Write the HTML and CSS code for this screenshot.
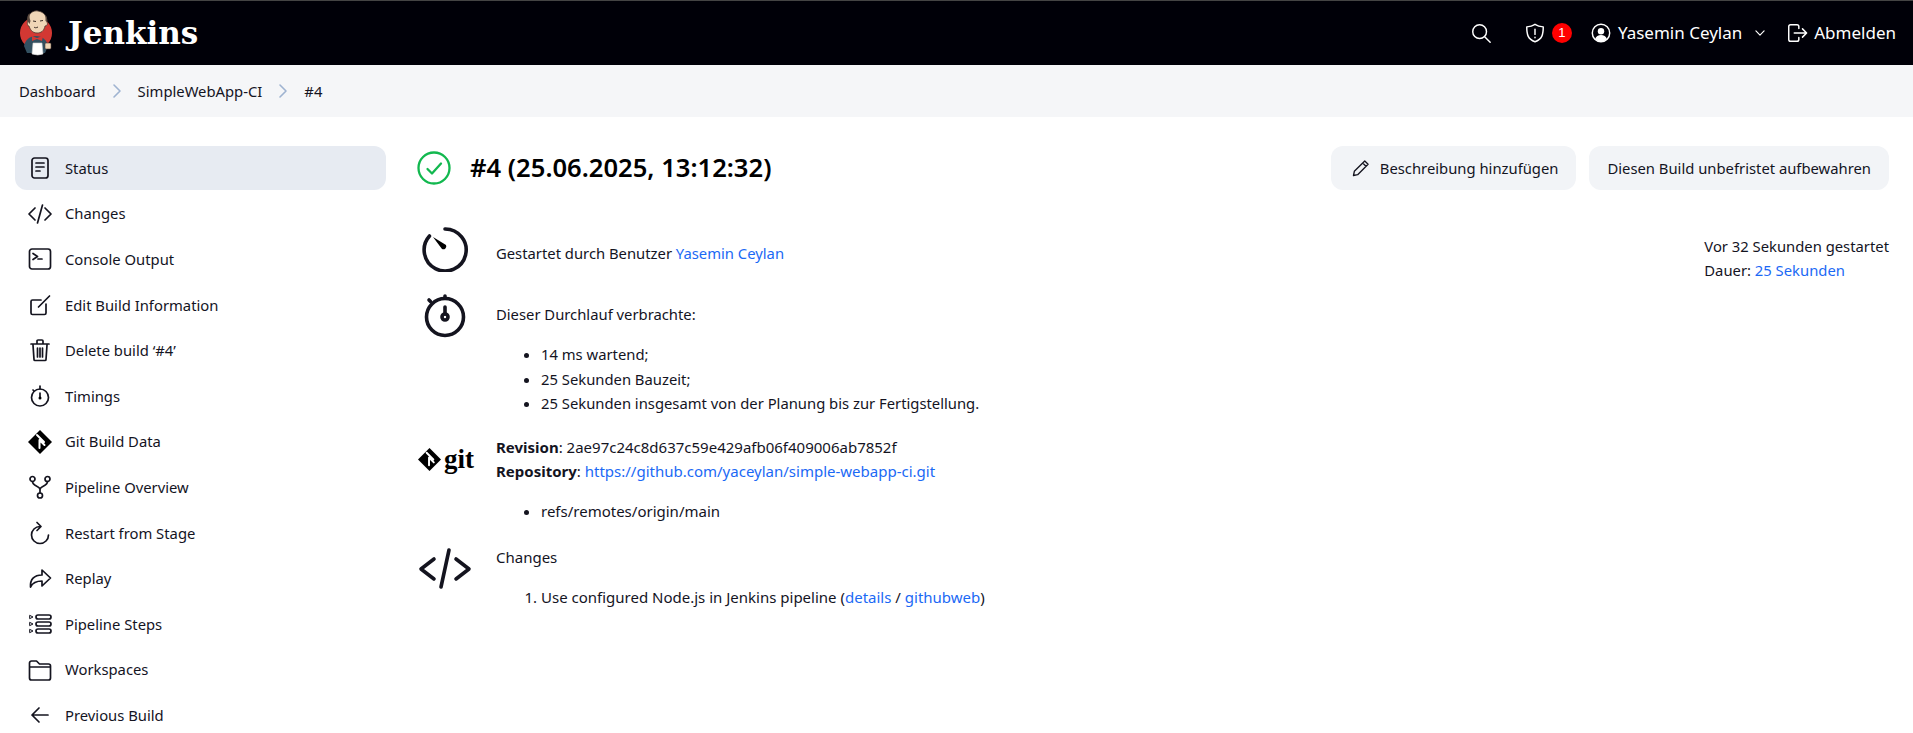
FILE: index.html
```html
<!DOCTYPE html>
<html lang="de">
<head>
<meta charset="utf-8">
<title>SimpleWebApp-CI #4 [Jenkins]</title>
<link rel="stylesheet" href="styles.css">
</head>
<body>
<header class="topbar">
  <a class="brand">
    <svg class="logo" viewBox="0 0 40 48" width="40" height="48">
      <circle cx="18" cy="24" r="16" fill="#d33833"/>
      <path d="M6 37c1-6 6-10 12-10s11 4 12 10l-3 7H9z" fill="#335061"/>
      <path d="M10 11c0-6 5-10 10-9 6 1 9 5 9 11 1 2 0 4-2 4-1 5-4 7-8 7-5 0-7-4-8-7-2 0-2-4-1-6z" fill="#f0d6b7" stroke="#4a3b32" stroke-width=".8"/>
      <path d="M9.500 12c-1-3 0-6 2-8 0 3 0 6 1 8l-1 3zM27.500 6c1.500 2 2 4 1.500 7l-1.500-1z" fill="#5b4a3f"/>
      <path d="M15 12l3 .5M22 12l3-.5M20 18c-2 1-3 1-4 0" fill="none" stroke="#3a2c25" stroke-width="1"/>
      <path d="M14 27l5 2 6-2-1 5-5-2-5 2z" fill="#d33833"/>
      <path d="M15 34h9l1 11q-5 2-11 0z" fill="#fff" stroke="#ccc" stroke-width=".6"/>
      <rect x="27" y="34" width="6" height="6" rx="1" fill="#f0d6b7" stroke="#4a3b32" stroke-width=".6"/>
    </svg>
    <span class="brand-name">Jenkins</span>
  </a>
  <nav class="top-actions">
    <svg class="ti search" viewBox="0 0 24 24"><circle cx="10.500" cy="10.500" r="7.500"/><path d="M16 16l6 6"/></svg>
    <svg class="ti shield" viewBox="0 0 24 24"><path d="M12 2.500c3 2 6 2.600 9 2.800 0 8-1 13.500-9 16.200C4 18.800 3 13.300 3 5.300c3-.2 6-.8 9-2.800z"/><path d="M12 8v5.500M12 16.500v.6"/></svg>
    <span class="badge">1</span>
    <svg class="ti user" viewBox="0 0 24 24"><circle cx="12" cy="12" r="9.500"/><circle class="fill" cx="12" cy="10" r="3.500"/><path class="fill" d="M5.500 18.500c1-3 3.500-4.300 6.500-4.300s5.500 1.300 6.500 4.300A9.500 9.500 0 0 1 12 21.500a9.500 9.500 0 0 1-6.500-3z"/></svg>
    <span class="user-name">Yasemin Ceylan</span>
    <svg class="ti chev" viewBox="0 0 24 24"><path d="M5 8.500l7 7 7-7"/></svg>
    <svg class="ti logout" viewBox="0 0 24 24"><path d="M14 7V5a2 2 0 0 0-2-2H5a2 2 0 0 0-2 2v14a2 2 0 0 0 2 2h7a2 2 0 0 0 2-2v-2M9 12h13M18 7.500l4.500 4.500-4.500 4.500"/></svg>
    <span class="logout-text">Abmelden</span>
  </nav>
</header>

<div class="crumbs">
  <a>Dashboard</a>
  <svg class="sep" viewBox="0 0 12 16"><path d="M3 2l6 6-6 6"/></svg>
  <a>SimpleWebApp-CI</a>
  <svg class="sep" viewBox="0 0 12 16"><path d="M3 2l6 6-6 6"/></svg>
  <a>#4</a>
</div>

<div class="page">
  <aside class="side">
    <a class="item active"><svg class="si" viewBox="0 0 24 24"><rect x="4" y="2" width="16" height="20" rx="2.500"/><path d="M8 7h8M8 11h8M8 15h4"/></svg>Status</a>
    <a class="item"><svg class="si" viewBox="0 0 24 24"><path d="M7 6l-6 6 6 6M17 6l6 6-6 6M14.500 3l-5 18"/></svg>Changes</a>
    <a class="item"><svg class="si" viewBox="0 0 24 24"><rect x="1.500" y="2" width="21" height="20" rx="2.500"/><path d="M5 6.500l4.500 3-4.500 3M10 12h4"/></svg>Console Output</a>
    <a class="item"><svg class="si" viewBox="0 0 24 24"><path d="M18 11v9a1.500 1.500 0 0 1-1.500 1.500H4.500A1.500 1.500 0 0 1 3 20V8.500A1.500 1.500 0 0 1 4.500 7H13M10.500 14L21.500 3"/></svg>Edit Build Information</a>
    <a class="item"><svg class="si" viewBox="0 0 24 24"><path d="M5 7l1 14.500a1 1 0 0 0 1 1h10a1 1 0 0 0 1-1L19 7M3 6h18M9 6V3a1 1 0 0 1 1-1h4a1 1 0 0 1 1 1v3M9.500 10v9M12 10v9M14.500 10v9"/></svg>Delete build ‘#4’</a>
    <a class="item"><svg class="si" viewBox="0 0 24 24"><circle cx="12" cy="13.500" r="8.500"/><path d="M12 5V2M12 14V9M6 7L5 6"/><circle class="dark" cx="12" cy="14" r="1.500"/></svg>Timings</a>
    <a class="item"><svg class="si git" viewBox="0 0 24 24"><path class="dark" d="M12 0 24 12 12 24 0 12z"/><path class="cut" d="M9 5l7 7M11.500 10v8M11.500 10l5 5"/></svg>Git Build Data</a>
    <a class="item"><svg class="si" viewBox="0 0 24 24"><circle cx="4.500" cy="4" r="2.500"/><circle cx="19.500" cy="4" r="2.500"/><circle cx="12" cy="20.500" r="2.500"/><path d="M4.500 6.500c0 5 7.500 4.500 7.500 8v3.500M19.500 6.500c0 5-7.500 4.500-7.500 8"/></svg>Pipeline Overview</a>
    <a class="item"><svg class="si" viewBox="0 0 24 24"><path d="M12 5.500a8.500 8.500 0 1 0 8.500 8.500M9 1.500l4 4-4 4"/></svg>Restart from Stage</a>
    <a class="item"><svg class="si" viewBox="0 0 24 24"><path d="M14 4l8.500 8L14 20v-5c-5 0-9 1-11.500 6C2 13.500 6 9 14 9z"/></svg>Replay</a>
    <a class="item"><svg class="si" viewBox="0 0 24 24"><rect x="8" y="3" width="15" height="4" rx="2"/><rect x="8" y="10" width="15" height="4" rx="2"/><rect x="8" y="17" width="15" height="4" rx="2"/><path class="thin" d="M2 3.500l3 1.500-3 1.500zM2 10.500l3 1.500-3 1.500zM2 17.500l3 1.500-3 1.500z"/></svg>Pipeline Steps</a>
    <a class="item"><svg class="si" viewBox="0 0 24 24"><path d="M1.500 20V5a2 2 0 0 1 2-2h5l3 3h9a2 2 0 0 1 2 2v12a2 2 0 0 1-2 2h-17a2 2 0 0 1-2-2zM1.500 9h21"/></svg>Workspaces</a>
    <a class="item"><svg class="si" viewBox="0 0 24 24"><path d="M20 12H4M11 5l-7 7 7 7"/></svg>Previous Build</a>
  </aside>

  <main class="main">
    <div class="head">
      <svg class="ok" viewBox="0 0 34 34"><circle cx="17" cy="17" r="15.500"/><path d="M10.500 18l4.500 4.500 9-10"/></svg>
      <h1>#4 (25.06.2025, 13:12:32)</h1>
      <button class="btn btn-icon"><svg class="pen" viewBox="0 0 24 24"><path d="M16.500 3.500l4 4L8 20l-5 1 1-5zM14 6l4 4"/></svg>Beschreibung hinzufügen</button>
      <button class="btn">Diesen Build unbefristet aufbewahren</button>
    </div>
    <div class="body">
      <div class="rows">
        <section class="row row-started">
          <svg class="big" viewBox="0 0 48 48"><path d="M24 5a21 21 0 1 1-15.500 7"/><path class="dark" d="M12 13l13 8a3 3 0 0 1-4 4z"/></svg>
          <p class="started">Gestartet durch Benutzer <a>Yasemin Ceylan</a></p>
        </section>
        <section class="row row-timing">
          <svg class="big" viewBox="0 0 48 48"><circle cx="24" cy="27" r="18.500"/><path d="M24 8V6M9.500 11.500l-1.500-1.500M24 17v7"/><circle cx="24" cy="27" r="3"/></svg>
          <div>
            <p class="lead">Dieser Durchlauf verbrachte:</p>
            <ul>
              <li>14 ms wartend;</li>
              <li>25 Sekunden Bauzeit;</li>
              <li>25 Sekunden insgesamt von der Planung bis zur Fertigstellung.</li>
            </ul>
          </div>
        </section>
        <section class="row row-git">
          <div class="gitlogo">
            <svg viewBox="0 0 24 24" width="23" height="23"><path class="dark" d="M12 0 24 12 12 24 0 12z"/><path class="cut" d="M9 5l7 7M11.500 10v8M11.500 10l5 5"/></svg>
            <span>git</span>
          </div>
          <div>
            <p><b>Revision</b>: 2ae97c24c8d637c59e429afb06f409006ab7852f</p>
            <p><b>Repository</b>: <a>https://github.com/yaceylan/simple-webapp-ci.git</a></p>
            <ul class="refs"><li>refs/remotes/origin/main</li></ul>
          </div>
        </section>
        <section class="row row-changes">
          <svg class="big code" viewBox="0 0 54 48"><path d="M16 14 3 24l13 10M38 14l13 10-13 10M31 5l-8 37"/></svg>
          <div>
            <p>Changes</p>
            <ol>
              <li>Use configured Node.js in Jenkins pipeline (<a>details</a> / <a>githubweb</a>)</li>
            </ol>
          </div>
        </section>
      </div>
      <div class="meta">
        <p>Vor 32 Sekunden gestartet</p>
        <p>Dauer: <a>25 Sekunden</a></p>
      </div>
    </div>
  </main>
</div>
</body>
</html>
```
FILE: styles.css
```css
* { box-sizing: border-box; }
html, body { margin: 0; height: 733px; overflow: hidden; }
body {
  font-family: "Noto Sans", "Open Sans", sans-serif;
  font-size: 14.8px;
  line-height: 24.4px;
  color: #14141f;
  background: #fff;
}
p { margin: 0; }
a { color: inherit; text-decoration: none; }
svg { fill: none; stroke: currentColor; stroke-width: 2; stroke-linecap: round; stroke-linejoin: round; flex: none; }
.dark { fill: #000; stroke: none; }
.cut { stroke: #fff; stroke-width: 2; }
.fill { fill: #fff; stroke: none; }
.thin { stroke-width: 1; }

.topbar {
  height: 65px;
  background: #000008;
  border-top: 1px solid #444;
  color: #fff;
  display: flex;
  align-items: center;
  justify-content: space-between;
}
.brand { display: flex; align-items: center; margin-left: 18px; }
.logo { stroke: none; margin-right: 10px; }
.logo path, .logo circle, .logo rect { stroke-linecap: butt; }
.brand-name { font: bold 31px/1 "DejaVu Serif", serif; }
.top-actions { display: flex; align-items: center; font-size: 17px; margin-right: 17px; }
.ti { width: 22px; height: 22px; stroke-width: 1.6; }
.search { margin-right: 32px; }
.shield { margin-right: 6px; }
.badge {
  width: 20px; height: 20px; border-radius: 50%;
  background: #f00; color: #fff; font: 13px/20px "Liberation Sans", sans-serif; text-align: center;
  margin-right: 18px;
}
.user { margin-right: 6px; }
.chev { width: 14px; height: 14px; margin: 0 19px 0 11px; stroke-width: 2; }
.logout { margin-right: 6px; }

.crumbs {
  height: 52px;
  background: #f5f6f8;
  display: flex;
  align-items: center;
  padding-left: 19px;
}
.sep { width: 12px; height: 16px; margin: 0 15px; color: #9fb3d1; stroke-width: 1.6; }

.page { display: flex; padding-top: 29px; }
.side { width: 400px; padding-left: 15px; padding-right: 14px; flex: none; }
.item {
  height: 44px;
  margin-bottom: 1.6px;
  padding-left: 13px;
  border-radius: 12px;
  display: flex;
  align-items: center;
  gap: 13px;
}
.active { background: #e7ebf2; }
.si { width: 24px; height: 24px; stroke-width: 1.700; }

.main { flex: 1; padding-left: 15px; padding-right: 24px; }
.head { display: flex; align-items: center; height: 44px; }
.ok { width: 34px; height: 34px; color: #12b84f; stroke-width: 2.300; margin-left: 2px; margin-right: 19px; }
h1 { font-size: 25.6px; font-weight: 600; line-height: 1; margin: 0 auto 0 0; color: #000; }
.btn {
  height: 44px;
  border: 0;
  border-radius: 12px;
  background: #f2f4f7;
  font: inherit;
  color: #14141f;
  padding: 0 18px;
  display: flex;
  align-items: center;
  margin-left: 13px;
}
.btn-icon { padding-left: 20px; }
.pen { width: 20px; height: 20px; margin-right: 9px; stroke-width: 1.600; }

.body { display: flex; justify-content: space-between; }
.rows { flex: 1; }
.row { display: grid; grid-template-columns: 81px 1fr; }
.big { width: 48px; height: 48px; stroke-width: 3.600; margin-left: 6px; }
.code { width: 54px; margin-left: 3px; }
.row-started { margin-top: 34px; height: 66px; }
.started { padding-top: 17px; }
.row-timing { height: 145px; }
.lead { padding-top: 12px; margin-bottom: 16px; }
ul, ol { margin: 0; padding: 0 0 0 45px; }
.row-git, .row-changes { font-size: 15px; }
.row-git { height: 110px; }
.gitlogo { display: flex; align-items: center; gap: 3px; height: 48px; margin-left: 3px; font: bold 27px/1 "Liberation Serif", serif; color: #000; }
.refs { margin-top: 15px; }
ol { margin-top: 16px; }
p a, li a { color: #1b69f5; }
.meta { padding-top: 44px; color: #14141f; }
```
